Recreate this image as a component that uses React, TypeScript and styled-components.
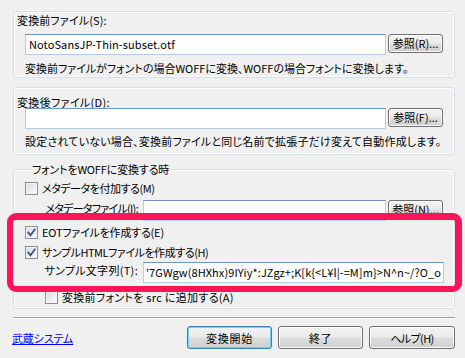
import React from 'react';
import styled, { createGlobalStyle, css } from 'styled-components';

const Global = createGlobalStyle`
  html, body { margin: 0; padding: 0; background: #f0f0f0; }
  body {
    font-family: "Noto Sans CJK JP", "Liberation Sans", sans-serif;
    font-size: 11px;
    color: #000;
  }
`;

const uiFont = css`
  font-family: "Noto Sans CJK JP", "Liberation Sans", sans-serif;
  font-size: 11px;
  font-feature-settings: "palt";
`;

const Dialog = styled.div`
  position: relative;
  width: 465px;
  height: 358px;
  box-sizing: border-box;
  padding: 11px 10px 0 13px;
  background: #f0f0f0;
  ${uiFont};
  display: flex;
  flex-direction: column;
  overflow: hidden;
`;

/* a run of text whose tracking is tuned to the dialog's original font */
const T = styled.span<{ $ls?: number }>`
  letter-spacing: ${(p) => p.$ls ?? 0}px;
  white-space: nowrap;
`;

const groupFrame = css`
  border: 1px solid #d5dfe5;
  border-radius: 3px;
  box-shadow: inset 0 0 0 1px #ffffff;
`;

const Box = styled.div<{ $pt: number; $pb: number; $mt?: number }>`
  ${groupFrame};
  margin-top: ${(p) => p.$mt ?? 0}px;
  padding: ${(p) => p.$pt}px 11px ${(p) => p.$pb}px 11px;
  display: flex;
  flex-direction: column;
`;

const Caption = styled.div<{ $lh: number }>`
  margin-left: -8px;
  line-height: ${(p) => p.$lh}px;
  height: ${(p) => p.$lh}px;
  white-space: nowrap;
`;

const Row = styled.div<{ $mt?: number }>`
  display: flex;
  align-items: flex-start;
  margin-top: ${(p) => p.$mt ?? 0}px;
`;

const Desc = styled.div<{ $mt: number }>`
  margin-top: ${(p) => p.$mt}px;
  line-height: 16px;
  height: 16px;
  white-space: nowrap;
`;

const TextBox = styled.div<{ $w: number }>`
  box-sizing: border-box;
  width: ${(p) => p.$w}px;
  height: 21px;
  background: #fff;
  border: 1px solid #b3cde6;
  border-top-color: #6f95bd;
  padding: 0 3px;
  line-height: 19px;
  white-space: nowrap;
  overflow: hidden;
  display: flex;
  flex-shrink: 0;
`;

const ScrolledBox = styled(TextBox)`
  justify-content: flex-end;
  padding-right: 2px;
`;

const Browse = styled.button`
  box-sizing: border-box;
  width: 55px;
  height: 19px;
  margin-left: 2px;
  padding: 0;
  border: 1px solid #707070;
  border-radius: 3px;
  background: linear-gradient(#f2f2f2 0%, #ebebeb 48%, #dddddd 52%, #cfcfcf 100%);
  box-shadow: inset 0 0 0 1px #fcfcfc;
  ${uiFont};
  line-height: 15px;
  color: #000;
  flex-shrink: 0;
`;

const Fieldset = styled.fieldset`
  ${groupFrame};
  margin: 8px 0 0 0;
  padding: 6px 11px 4px 11px;
  min-width: 0;
  display: flex;
  flex-direction: column;
`;

const Legend = styled.legend`
  margin-left: 6px;
  padding: 0 1px;
  line-height: 12px;
  height: 12px;
  white-space: nowrap;
`;

const Check = styled.label<{ $mt: number; $ml?: number }>`
  display: flex;
  align-items: center;
  gap: 4px;
  height: 14px;
  margin-top: ${(p) => p.$mt}px;
  margin-left: ${(p) => p.$ml ?? 0}px;
  white-space: nowrap;
  line-height: 14px;
`;

const CheckSquare = styled.span`
  box-sizing: border-box;
  width: 13px;
  height: 13px;
  border: 1px solid #8e8f8f;
  background: linear-gradient(135deg, #d3d6da 0%, #eeeeee 55%, #fbfbfb 100%);
  box-shadow: inset 0 0 0 1px #f4f4f4;
  display: flex;
  align-items: center;
  justify-content: center;
  flex-shrink: 0;
`;

const FieldLabel = styled.div`
  width: 113px;
  margin-right: 5px;
  text-align: right;
  white-space: nowrap;
  line-height: 12px;
  padding-top: 2px;
  flex-shrink: 0;
`;

const Separator = styled.div`
  margin-top: 8px;
  height: 0;
  border-top: 1px solid #a0a0a0;
  border-bottom: 1px solid #ffffff;
`;

const Footer = styled.div`
  margin-top: 7px;
  display: flex;
  align-items: center;
`;

const Link = styled.a`
  margin-left: -1px;
  color: #0000ff;
  text-decoration: underline;
  white-space: nowrap;
  cursor: pointer;
`;

const Buttons = styled.div`
  margin-left: auto;
  display: flex;
  gap: 6px;
`;

const PushButton = styled.button<{ $default?: boolean; $w: number }>`
  box-sizing: border-box;
  width: ${(p) => p.$w}px;
  height: 23px;
  padding: 0;
  border: 1px solid ${(p) => (p.$default ? '#3c7fb1' : '#707070')};
  border-radius: 3px;
  background: linear-gradient(#f2f2f2 0%, #ebebeb 48%, #dddddd 52%, #cfcfcf 100%);
  box-shadow: inset 0 0 0 1px ${(p) => (p.$default ? '#6fd0f7' : '#fcfcfc')};
  ${uiFont};
  color: #000;
`;

const Highlight = styled.div`
  position: absolute;
  left: 7px;
  top: 213px;
  width: 455px;
  height: 79px;
  box-sizing: border-box;
  border: 6px solid #ff1459;
  border-top-width: 7px;
  border-right-width: 7px;
  border-radius: 9px;
  pointer-events: none;
`;

const CheckMark = () => (
  <svg width="9" height="9" viewBox="0 0 9 9">
    <path d="M1.2 4.6 L3.5 7.2 L7.8 1.4" fill="none" stroke="#3a4e8c" strokeWidth="1.8" strokeLinecap="square" />
  </svg>
);

const CheckBox: React.FC<{ checked?: boolean; mt: number; ml?: number; ls: number; children: React.ReactNode }> = ({
  checked,
  mt,
  ml,
  ls,
  children,
}) => (
  <Check $mt={mt} $ml={ml}>
    <CheckSquare>{checked && <CheckMark />}</CheckSquare>
    <T $ls={ls}>{children}</T>
  </Check>
);

const SAMPLE_TAIL = "'7GWgw(8HXhx)9IYiy*:JZgz+;K[k{<L¥l|-=M]m}>N^n~/?O_o";

export default function App() {
  return (
    <Dialog>
      <Global />
      <Box $pt={0} $pb={1}>
        <Caption $lh={16}>
          <T $ls={0.15}>変換前ファイル(S):</T>
        </Caption>
        <Row $mt={6}>
          <TextBox $w={361}>
            <T $ls={0.1}>NotoSansJP-Thin-subset.otf</T>
          </TextBox>
          <Browse>
            <T>参照(R)...</T>
          </Browse>
        </Row>
        <Desc $mt={5}>
          <T>変換前ファイルがフォントの場合WOFFに変換、WOFFの場合フォントに変換します。</T>
        </Desc>
      </Box>

      <Box $pt={8} $pb={5} $mt={9}>
        <Caption $lh={12}>
          <T $ls={0.35}>変換後ファイル(D):</T>
        </Caption>
        <Row>
          <TextBox $w={361} />
          <Browse>
            <T>参照(F)...</T>
          </Browse>
        </Row>
        <Desc $mt={4}>
          <T $ls={0.2}>設定されていない場合、変換前ファイルと同じ名前で拡張子だけ変えて自動作成します。</T>
        </Desc>
      </Box>

      <Fieldset>
        <Legend>
          <T $ls={-0.15}>フォントをWOFFに変換する時</T>
        </Legend>
        <CheckBox mt={0} ls={-0.45}>
          メタデータを付加する(M)
        </CheckBox>
        <Row $mt={5}>
          <FieldLabel>
            <T $ls={-0.7}>メタデータファイル(I):</T>
          </FieldLabel>
          <TextBox $w={243} />
          <Browse>
            <T>参照(N)...</T>
          </Browse>
        </Row>
        <CheckBox checked mt={4} ls={-0.2}>
          EOTファイルを作成する(E)
        </CheckBox>
        <CheckBox checked mt={6} ls={-0.45}>
          サンプルHTMLファイルを作成する(H)
        </CheckBox>
        <Row $mt={3}>
          <FieldLabel>
            <T $ls={0.3}>サンプル文字列(T):</T>
          </FieldLabel>
          <ScrolledBox $w={301}>
            <T $ls={0.08}>{SAMPLE_TAIL}</T>
          </ScrolledBox>
        </Row>
        <CheckBox mt={7} ml={20} ls={0.3}>
          変換前フォントを src に追加する(A)
        </CheckBox>
      </Fieldset>

      <Separator />

      <Footer>
        <Link>
          <T $ls={-0.15}>武蔵システム</T>
        </Link>
        <Buttons>
          <PushButton $default $w={85}>
            <T $ls={0.7}>変換開始</T>
          </PushButton>
          <PushButton $w={85}>
            <T $ls={0.5}>終了</T>
          </PushButton>
          <PushButton $w={86}>
            <T $ls={-0.6}>ヘルプ(H)</T>
          </PushButton>
        </Buttons>
      </Footer>

      <Highlight />
    </Dialog>
  );
}
